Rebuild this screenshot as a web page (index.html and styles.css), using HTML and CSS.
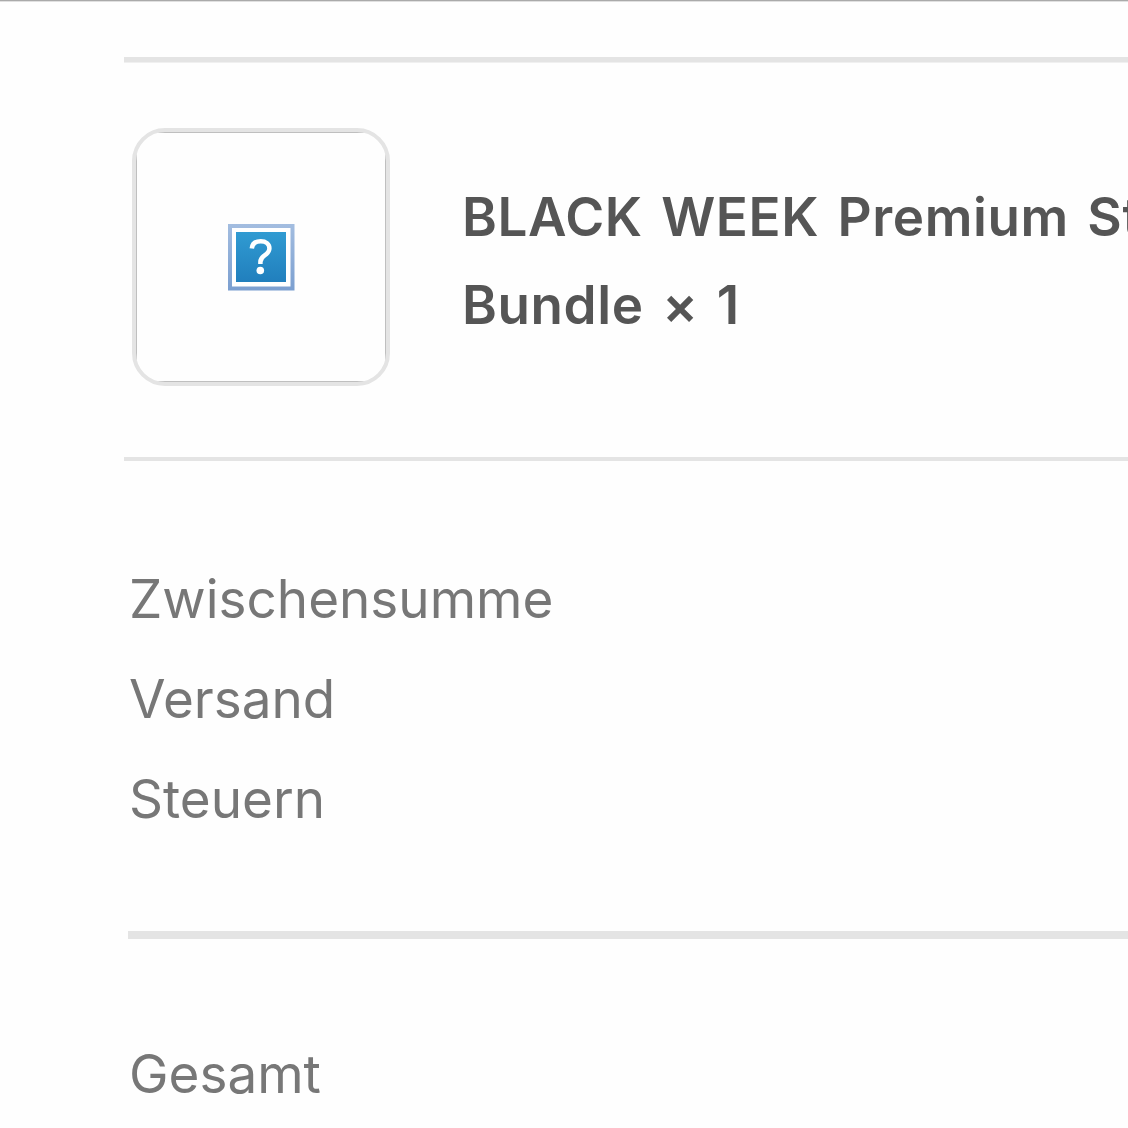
FILE: index.html
```html
<!DOCTYPE html>
<html lang="de">
<head>
    <meta charset="UTF-8">
    <meta name="viewport" content="width=device-width, initial-scale=1.0">
    <title>Bestellung</title>
    <link rel="stylesheet" href="styles.css">
</head>
<body>
    <div class="order">
        <div class="product">
            <div class="thumb">
                <div class="thumb-inner">
                    <svg class="missing" width="67" height="67" viewBox="0 0 67 67">
                        <defs>
                            <linearGradient id="blue" x1="0" y1="0" x2="0" y2="1">
                                <stop offset="0" stop-color="#309bd2"/>
                                <stop offset="1" stop-color="#217fbd"/>
                            </linearGradient>
                            <linearGradient id="frame" x1="0" y1="0" x2="0" y2="1">
                                <stop offset="0" stop-color="#a3bde0"/>
                                <stop offset="1" stop-color="#7b9fd0"/>
                            </linearGradient>
                        </defs>
                        <rect width="66.5" height="66.5" fill="url(#frame)"/>
                        <rect x="4" y="4" width="58.5" height="58.5" fill="#fff"/>
                        <rect x="8" y="8" width="50" height="50" fill="url(#blue)"/>
                        <path d="M23.8 24.5C24.3 19.6 27.8 17.2 32.7 17.2C38 17.2 41.4 20 41.4 24.2C41.4 27.6 39.6 29.4 36.6 31.4C33.6 33.4 32.4 35 32.4 38V40" fill="none" stroke="#fff" stroke-width="4.5"/>
                        <circle cx="32.3" cy="46.5" r="3.8" fill="#fff"/>
                    </svg>
                </div>
            </div>
            <div class="name">BLACK WEEK Premium St<br>Bundle × 1</div>
        </div>

        <div class="totals">
            <div class="row">Zwischensumme</div>
            <div class="row">Versand</div>
            <div class="row">Steuern</div>
        </div>

        <div class="sum">
            <div class="row">Gesamt</div>
        </div>
    </div>
</body>
</html>
```

FILE: styles.css
```css
* {
    box-sizing: border-box;
}
body {
    margin: 0;
    height: 1128px;
    overflow: hidden;
    background-color: #fefefe;
    font-family: Inter, "Liberation Sans", sans-serif;
    font-size: 53px;
    color: #777;
    border-top: 1px solid #aaa;
    box-shadow: inset 0 1px 0 #e0e0e0;
}
.order {
    padding-top: 56px;
    padding-left: 124px;
}
.product {
    display: flex;
    height: 404px;
    padding: 66px 0 0 8px;
    border-top: 5px solid #e4e4e4;
    border-bottom: 4px solid #e4e4e4;
    box-shadow: inset 0 1px 0 #f0f0f0;
}
.thumb {
    flex: none;
    width: 258px;
    height: 258px;
    border: 4px solid #e4e4e4;
    border-radius: 33px;
    overflow: hidden;
}
.thumb-inner {
    display: flex;
    align-items: center;
    justify-content: center;
    height: 250px;
    padding-top: 1px;
    border: 1px solid #bfbfbf;
}
.missing {
    display: block;
}
.name {
    flex: 1;
    min-width: 0;
    padding-top: 45px;
    margin-left: 72px;
    overflow: hidden;
    line-height: 88px;
    font-weight: 600;
    color: #555;
    white-space: nowrap;
    letter-spacing: 0.6px;
    word-spacing: 4.5px;
}
.totals {
    margin-left: 4px;
    padding-top: 88px;
    height: 478px;
    border-bottom: 8px solid #e4e4e4;
}
.row {
    padding-left: 1px;
    line-height: 100px;
}
.sum {
    margin-left: 4px;
    padding-top: 85px;
}
```
